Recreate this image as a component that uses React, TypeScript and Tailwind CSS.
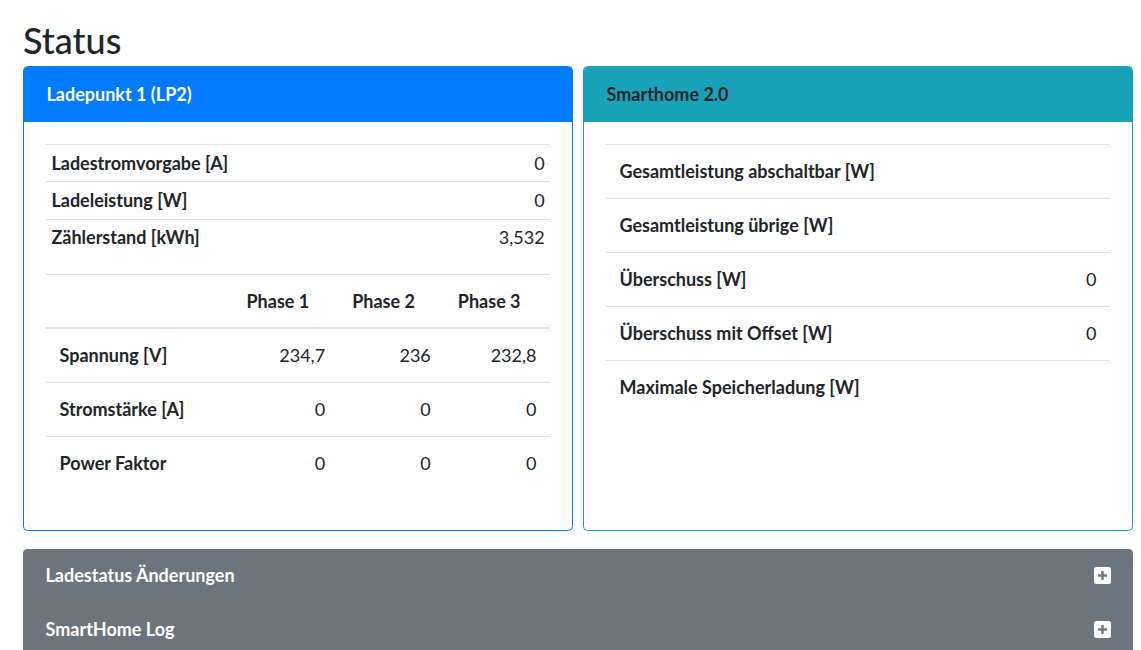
import React from 'react';

const FONT = "font-['Lato','Noto_Sans',sans-serif]";

const basics = [
  { label: 'Ladestromvorgabe [A]', value: '0' },
  { label: 'Ladeleistung [W]', value: '0' },
  { label: 'Zählerstand [kWh]', value: '3,532' },
];

const phases = [
  { label: 'Spannung [V]', values: ['234,7', '236', '232,8'] },
  { label: 'Stromstärke [A]', values: ['0', '0', '0'] },
  { label: 'Power Faktor', values: ['0', '0', '0'] },
];

const smarthome = [
  { label: 'Gesamtleistung abschaltbar [W]', value: '' },
  { label: 'Gesamtleistung übrige [W]', value: '' },
  { label: 'Überschuss [W]', value: '0' },
  { label: 'Überschuss mit Offset [W]', value: '0' },
  { label: 'Maximale Speicherladung [W]', value: '' },
];

/** Weißes Plus-Quadrat (wie fa-plus-square) */
function PlusSquare() {
  return (
    <svg width="17" height="17" viewBox="0 0 17 17" className="shrink-0">
      <rect x="0" y="0" width="17" height="17" rx="2.5" fill="#ffffff" />
      <rect x="4" y="7.3" width="9" height="2.4" fill="#6c757d" />
      <rect x="7.3" y="4" width="2.4" height="9" fill="#6c757d" />
    </svg>
  );
}

function LadepunktCard() {
  return (
    <div className="flex flex-col rounded-[4.5px] border border-[#007bff] bg-white">
      <div className="h-[55px] rounded-t-[3.5px] border-b border-[#007bff] bg-[#007bff] px-[22.5px] py-[13.5px] text-[18px] leading-[27px] font-bold text-white">
        Ladepunkt 1 (LP2)
      </div>
      <div className="p-[22px]">
        <table className="mb-[18px] w-full border-collapse">
          <tbody>
            {basics.map((row) => (
              <tr key={row.label} className="border-t border-[#dee2e6]">
                <th className="px-[5.4px] py-[4.7px] text-left font-bold">{row.label}</th>
                <td className="px-[5.4px] py-[4.7px] text-right">{row.value}</td>
              </tr>
            ))}
          </tbody>
        </table>
        <table className="mb-[18px] w-full table-fixed border-collapse">
          <thead>
            <tr className="border-t border-[#dee2e6]">
              <th className="w-[187px] border-b-2 border-[#dee2e6] px-[13.5px] py-[12.5px]" />
              <th className="border-b-2 border-[#dee2e6] px-[13.5px] py-[12.5px] text-left font-bold">Phase 1</th>
              <th className="border-b-2 border-[#dee2e6] px-[13.5px] py-[12.5px] text-left font-bold">Phase 2</th>
              <th className="border-b-2 border-[#dee2e6] px-[13.5px] py-[12.5px] text-left font-bold">Phase 3</th>
            </tr>
          </thead>
          <tbody>
            {phases.map((row, i) => (
              <tr key={row.label} className={i > 0 ? 'border-t border-[#dee2e6]' : ''}>
                <th className="px-[13.5px] py-[13px] text-left font-bold">{row.label}</th>
                {row.values.map((v, j) => (
                  <td key={j} className="px-[13.5px] py-[13px] text-right">
                    {v}
                  </td>
                ))}
              </tr>
            ))}
          </tbody>
        </table>
      </div>
    </div>
  );
}

function SmarthomeCard() {
  return (
    <div className="flex flex-col rounded-[4.5px] border border-[#17a2b8] bg-white">
      <div className="h-[55px] rounded-t-[3.5px] border-b border-[#17a2b8] bg-[#17a2b8] px-[22.5px] py-[13.5px] text-[18px] leading-[27px] font-bold text-[#212529]">
        Smarthome 2.0
      </div>
      <div className="p-[22px]">
        <table className="w-full border-collapse">
          <tbody>
            {smarthome.map((row) => (
              <tr key={row.label} className="border-t border-[#dee2e6]">
                <th className="px-[13.5px] py-[13px] text-left font-bold">{row.label}</th>
                <td className="px-[13.5px] py-[13px] text-right">{row.value}</td>
              </tr>
            ))}
          </tbody>
        </table>
      </div>
    </div>
  );
}

export default function App() {
  return (
    <div className={`${FONT} min-h-screen bg-white pr-[8px] pl-[23px] text-[18px] leading-[27px] text-[#212529]`}>
      <h2 className="pt-[19px] pb-[4px] text-[36px] leading-[43px] font-medium">Status</h2>
      <div className="grid grid-cols-2 gap-[10px]">
        <LadepunktCard />
        <SmarthomeCard />
      </div>
      <div className="mt-[18px] rounded-[4.5px] bg-[#6c757d] text-white">
        {['Ladestatus Änderungen', 'SmartHome Log'].map((title) => (
          <div key={title} className="flex h-[53.5px] items-center justify-between px-[22.5px] font-bold">
            <span>{title}</span>
            <PlusSquare />
          </div>
        ))}
      </div>
    </div>
  );
}
